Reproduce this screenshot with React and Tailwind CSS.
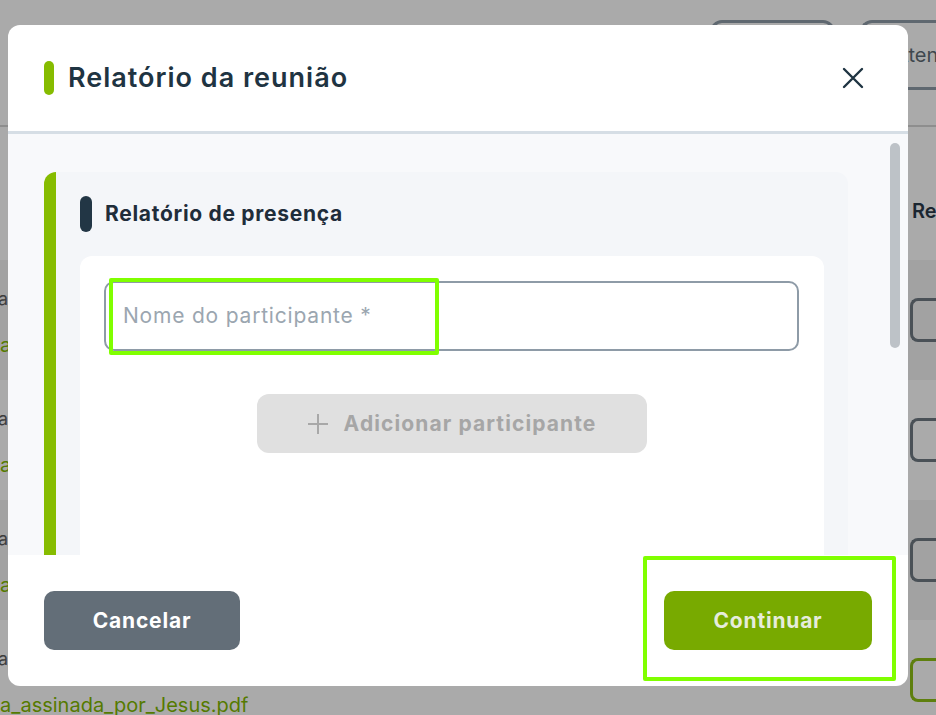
import React from "react";

const rows = [
  { label: "Ata_de_reuniao", file: "Ata_assinada.pdf", dark: true, green: false },
  { label: "Ata_de_reuniao", file: "Ata_assinada.pdf", dark: false, green: false },
  { label: "Ata_de_reuniao", file: "Ata_assinada.pdf", dark: true, green: false },
  { label: "Ata_de_reuniao", file: "Ata_assinada_por_Jesus.pdf", dark: false, green: true },
];

// Page behind the dialog, dimmed by the overlay colours
const BackgroundPage = () => (
  <div className="flex flex-col w-full h-full">
    {/* Top actions */}
    <div className="flex h-[127px] shrink-0 items-start justify-end gap-[25px] pt-5 border-b-2 border-[#8e8e8e]">
      <div className="w-[125px] h-[70px] rounded-xl border-[3px] border-[#5f6870]"></div>
      <div className="w-[76px] h-[70px] rounded-l-xl border-[3px] border-r-0 border-[#5f6870] flex items-center pl-[32px] overflow-hidden">
        <span className="text-[20px] text-[#3f474e] whitespace-nowrap">Atender</span>
      </div>
    </div>

    {/* Column header */}
    <div className="flex h-[133px] shrink-0 items-center justify-end pt-[34px]">
      <span className="w-[24px] overflow-hidden whitespace-nowrap text-[20px] font-semibold text-[#1b2631]">
        Relatório
      </span>
    </div>

    {/* Rows */}
    {rows.map((row, i) => (
      <div
        key={i}
        className={`flex h-[120px] shrink-0 items-center justify-between ${
          row.dark ? "bg-[#a2a2a2]" : "bg-[#aaaaaa]"
        }`}
      >
        <div className="flex flex-col gap-[18px] -ml-[20px] pt-1">
          <span className="text-[18px] text-[#3e3e3e]">{row.label}</span>
          <span className="text-[20px] text-[#557a00]">{row.file}</span>
        </div>
        <div
          className={`w-[26px] h-[44px] rounded-l-lg border-[3px] border-r-0 ${
            row.green ? "border-[#5e7f0e]" : "border-[#4a5157]"
          }`}
        ></div>
      </div>
    ))}
  </div>
);

const CloseIcon = () => (
  <svg width="22" height="22" viewBox="0 0 22 22" fill="none">
    <path d="M2 2L20 20M20 2L2 20" stroke="#1f3442" strokeWidth="2.4" strokeLinecap="round" />
  </svg>
);

const PlusIcon = () => (
  <svg width="22" height="22" viewBox="0 0 22 22" fill="none">
    <path d="M11 1V21M1 11H21" stroke="#a8a8a8" strokeWidth="2" />
  </svg>
);

const MeetingReportModal = () => (
  <div className="absolute left-2 top-[25px] w-[900px] h-[661px] bg-white rounded-xl flex flex-col overflow-hidden">
    {/* Header */}
    <div className="flex h-[109px] shrink-0 items-center justify-between pl-9 pr-[44px] border-b-[3px] border-[#d6dee5]">
      <div className="flex items-center gap-[14px]">
        <div className="w-[10px] h-[34px] rounded-full bg-[#86bc00]"></div>
        <h2 className="text-[27px] font-semibold text-[#1f3442] tracking-[1px]">
          Relatório da reunião
        </h2>
      </div>
      <CloseIcon />
    </div>

    {/* Scrollable body */}
    <div className="relative flex-1 bg-[#f8f9fb] overflow-hidden pl-9 pr-[60px] pt-[38px]">
      <div className="h-full flex rounded-t-xl overflow-hidden">
        <div className="w-[12px] bg-[#86bc00] shrink-0"></div>
        <div className="flex-1 bg-[#f4f6f9] flex flex-col px-6 pt-6">
          <div className="flex items-center gap-[13px]">
            <div className="w-[12px] h-[36px] rounded-full bg-[#223645]"></div>
            <h3 className="text-[21px] font-bold tracking-[0.7px] text-[#1f2d3a]">Relatório de presença</h3>
          </div>
          <div className="mt-6 flex-1 bg-white rounded-t-xl pl-6 pr-[25px] pt-[25px] flex flex-col">
            <div className="h-[70px] rounded-[10px] border-2 border-[#8e9ba7] flex items-center pl-[17px]">
              <span className="text-[21px] tracking-[0.8px] text-[#9ba6b0]">Nome do participante *</span>
            </div>
            <div className="flex justify-center mt-[43px]">
              <button className="w-[390px] h-[59px] rounded-xl bg-[#e0e0e0] flex items-center justify-center gap-[15px]">
                <PlusIcon />
                <span className="text-[21px] font-bold tracking-[1.1px] text-[#a6a6a6]">Adicionar participante</span>
              </button>
            </div>
          </div>
        </div>
      </div>
      {/* Scrollbar thumb */}
      <div className="absolute right-[8px] top-[9px] w-[10px] h-[205px] rounded-full bg-[#bdc2c7]"></div>
    </div>

    {/* Footer */}
    <div className="flex h-[131px] shrink-0 items-center justify-between px-9">
      <button className="w-[196px] h-[59px] rounded-[10px] bg-[#636e78] text-white text-[21px] font-bold tracking-[0.8px]">
        Cancelar
      </button>
      <button className="w-[208px] h-[59px] rounded-[10px] bg-[#78aa00] text-[#e6ecdc] text-[21px] font-bold tracking-[0.8px]">
        Continuar
      </button>
    </div>
  </div>
);

export default function App() {
  return (
    <div className="relative w-[936px] h-[715px] overflow-hidden bg-[#aaaaaa] font-['Inter','Noto_Sans',sans-serif]">
      <BackgroundPage />
      <MeetingReportModal />

      {/* Highlight annotations */}
      <div className="absolute left-[109px] top-[278px] w-[330px] h-[77px] border-4 border-[#80ff00] rounded-[2px]"></div>
      <div className="absolute left-[643px] top-[556px] w-[253px] h-[125px] border-4 border-[#80ff00] rounded-[2px]"></div>
    </div>
  );
}
